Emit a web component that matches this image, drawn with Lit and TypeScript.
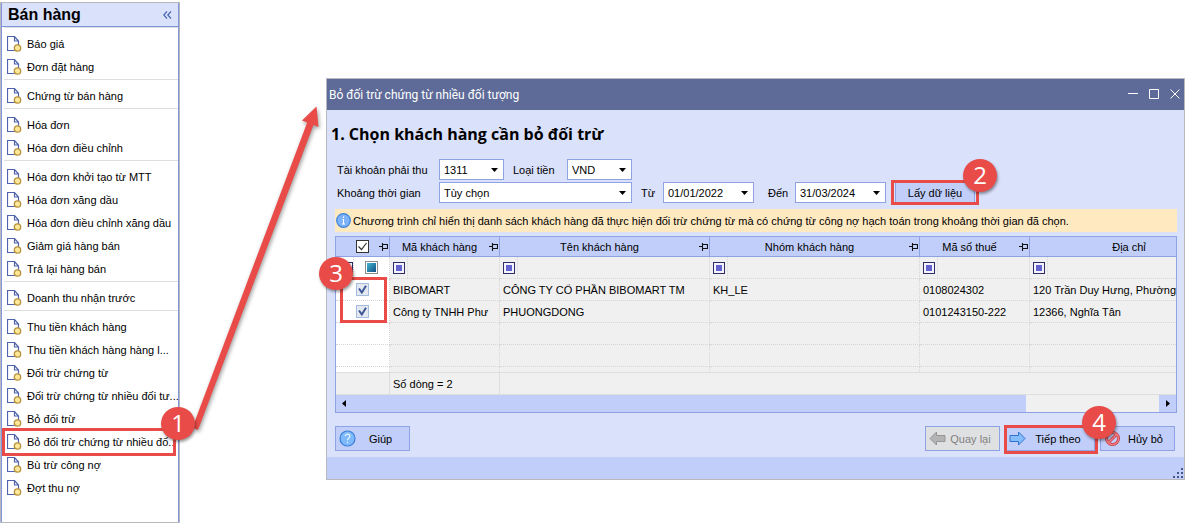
import { LitElement, html, css, svg, nothing } from "lit";
import { customElement } from "lit/decorators.js";

const MENU: string[][] = [
  ["Báo giá", "Đơn đặt hàng"],
  ["Chứng từ bán hàng"],
  ["Hóa đơn", "Hóa đơn điều chỉnh"],
  ["Hóa đơn khởi tạo từ MTT", "Hóa đơn xăng dầu", "Hóa đơn điều chỉnh xăng dầu", "Giảm giá hàng bán", "Trả lại hàng bán"],
  ["Doanh thu nhận trước"],
  [
    "Thu tiền khách hàng",
    "Thu tiền khách hàng hàng l...",
    "Đối trừ chứng từ",
    "Đối trừ chứng từ nhiều đối tư...",
    "Bỏ đối trừ",
    "Bỏ đối trừ chứng từ nhiều đố..",
    "Bù trừ công nợ",
    "Đợt thu nợ",
  ],
];
const ACTIVE = "Bỏ đối trừ chứng từ nhiều đố..";

const ROWS: string[][] = [
  ["BIBOMART", "CÔNG TY CỔ PHẦN BIBOMART TM", "KH_LE", "0108024302", "120 Trần Duy Hưng, Phường"],
  ["Công ty TNHH Phư", "PHUONGDONG", "", "0101243150-222", "12366, Nghĩa Tân"],
];
const COLUMNS = ["Mã khách hàng", "Tên khách hàng", "Nhóm khách hàng", "Mã số thuế", "Địa chỉ"];

const docIcon = html`<svg class="doc" width="15" height="16" viewBox="0 0 15 16" aria-hidden="true">
  <path d="M8 .5H.5v14h11V5L7.500 .5v4.500h4.500" fill="#fff" stroke="#4f62ad" stroke-width="1.200"/>
  <circle cx="10.500" cy="12" r="3.200" fill="#fde79a" stroke="#b8923a" stroke-width="1.300"/>
</svg>`;
const caret = html`<svg class="caret" width="7" height="4" viewBox="0 0 7 4" aria-hidden="true"><path d="M0 0h7L3.500 4z" fill="#000"/></svg>`;
const pin = html`<svg class="pin" width="9" height="8" viewBox="0 0 9 8" aria-hidden="true"><path d="M0 3.500h3M3.500 0v8M4 1.500h4.500v4H4M4 5.500h5" fill="none" stroke="#111" stroke-width="1.100"/></svg>`;
const filterMark = html`<span class="filter"><i class="mark"></i></span>`;

@customElement("app-root")
export class AppRoot extends LitElement {
  static styles = css`
    :host {
      display: flex;
      align-items: flex-start;
      position: relative;
      padding: 2px 4px 4px 0;
      background: #fff;
      color: #000;
      font: 11px/14px "Liberation Sans", Arial, sans-serif;
    }
    * { box-sizing: border-box; }
    svg { display: block; flex: none; }
    button, input, select { font: inherit; color: inherit; margin: 0; }

    .side {
      flex: none;
      width: 180px;
      padding-bottom: 22px;
      border: 1px solid #b9b9bd;
      box-shadow: inset 1px 0 #8095db, inset -1px 0 #8095db;
      margin-right: 146px;
    }
    .side-head {
      display: flex;
      align-items: center;
      justify-content: space-between;
      height: 24px;
      padding: 0 6px;
      margin: 0 1px;
      background: #dae1fb;
      border-bottom: 1px solid #8095db;
    }
    .side-head h2 { margin: 0; font-size: 16px; line-height: 22px; }
    .collapse { border: 0; padding: 0; background: none; }
    .group { margin: 0 1px 0 3px; padding: 5px 0 0; border-top: 1px solid #dedede; }
    .item { position: relative; }
    .link {
      display: flex;
      align-items: center;
      gap: 5px;
      height: 23px;
      padding: 0 0 1px 3px;
      color: #000;
      text-decoration: none;
      white-space: nowrap;
    }

    .frame { position: absolute; border: 3px solid #e84b48; pointer-events: none; }
    .badge {
      position: absolute;
      width: 34px;
      height: 33px;
      border-radius: 50%;
      background: #e84b48;
      box-shadow: 1px 2px 3px rgba(0, 0, 0, .4);
      color: #fff;
      font: 24px/32px "Open Sans", "Noto Sans", sans-serif;
      text-align: center;
      pointer-events: none;
      z-index: 2;
    }
    .frame-menu { inset: -3px 2px -2px -2px; }
    .badge-menu { right: -17px; top: -24px; }
    .frame-load { inset: -2px -4px -2px -4px; }
    .badge-load { right: -22px; top: -23px; }
    .frame-checks { left: 4px; top: 40px; width: 47px; height: 46px; }
    .badge-checks { left: -17px; top: 20px; }
    .frame-next { inset: -1px -3px -3px -1px; }
    .badge-next { right: -21px; top: -20px; }
    .arrow { position: absolute; left: 190px; top: 100px; }

    .window {
      flex: 1;
      min-width: 0;
      margin-top: 76px;
      border: 1px solid #b9b9bd;
      background: #dae1fb;
    }
    .titlebar {
      display: flex;
      align-items: center;
      height: 31px;
      padding: 0 3px 0 2px;
      background: #5e6b98;
      color: #fff;
      font: 12px/16px Roboto, "Noto Sans", sans-serif;
    }
    .titlebar h1 { flex: 1; margin: 0; font: inherit; }
    .wm { border: 0; padding: 0; margin-left: 10px; background: none; }
    .content { padding: 0 7px 6px 8px; }
    .content h2 {
      margin: 0 0 0 -4px;
      padding: 12px 0;
      font: bold 16px/25px "Open Sans", "Noto Sans", sans-serif;
    }
    .line { display: flex; align-items: center; height: 21px; padding-left: 2px; margin-bottom: 2px; }
    .l-main { width: 102px; }
    .l-cur { width: 63px; padding-left: 9px; }
    .l-from { width: 31px; padding-left: 9px; }
    .l-to { width: 41px; padding-left: 14px; }
    .combo { position: relative; height: 21px; }
    .w-s { width: 65px; }
    .w-m { width: 91px; }
    .w-l { width: 193px; }
    .combo select, .combo input {
      display: block;
      width: 100%;
      height: 21px;
      padding: 0 16px 0 4px;
      appearance: none;
      border: 1px solid #8ea2e4;
      border-radius: 0;
      background: #fff;
      line-height: 14px;
    }
    .caret { position: absolute; right: 6px; top: 9px; pointer-events: none; }
    .host { position: relative; }
    .line .host { margin-left: 9px; }
    .btn {
      display: flex;
      align-items: center;
      width: 75px;
      height: 25px;
      padding: 0 4px 0 3px;
      border: 1px solid #8ea2e4;
      background: #c1cef9;
      white-space: nowrap;
    }
    .btn span { flex: 1; text-align: center; }
    .btn.load { width: 80px; height: 21px; padding: 0; }
    .btn.next { width: 90px; }
    .btn:disabled { background: #dfe0e2; color: #808080; }
    .note {
      display: flex;
      align-items: center;
      gap: 2px;
      height: 23px;
      margin: 6px 0 4px;
      padding-left: 1px;
      background: #ffe9c0;
      white-space: nowrap;
    }

    .grid { position: relative; border: 1px solid #8ea2e4; }
    .clip { overflow: hidden; background: #f0f0f0; }
    table { table-layout: fixed; width: 894px; border-collapse: separate; border-spacing: 0; }
    .c0 { width: 54px; }
    .c-n { width: 110px; }
    .c-w { width: 210px; }
    .c-a { width: 200px; }
    th, td { padding: 0; overflow: hidden; white-space: nowrap; text-align: left; }
    th { height: 20px; border: solid #8ea2e4; border-width: 0 1px 1px 0; background: #c1cef9; font-weight: normal; }
    .th { display: flex; align-items: center; height: 19px; padding-right: 1px; }
    .th span { flex: 1; text-align: center; }
    .th .box { margin-left: 20px; margin-right: 10px; }
    tbody td { height: 22px; padding-left: 3px; border: dotted #d6d6d6; border-width: 0 1px 1px 0; }
    tbody .pick { background: #fff; padding-left: 20px; }
    tbody .filters td { padding-left: 0; }
    .filler td { height: 5px; border-bottom: 0; }
    tfoot td { height: 23px; padding-left: 3px; border: solid #dedede; border-width: 1px 1px 1px 0; }
    tfoot .plain { border-right: 0; }
    .filter { display: flex; align-items: center; width: 18px; height: 21px; padding-left: 3px; border-right: 1px dotted #d6d6d6; }
    .mark { width: 12px; height: 12px; border: 1px solid #302c68; background: #6463cf; box-shadow: inset 0 0 0 2px #f4f4ff; }
    .pair { display: flex; align-items: center; }
    .pair .filter { padding-left: 5px; }
    .box {
      display: block;
      appearance: none;
      flex: none;
      width: 13px;
      height: 13px;
      margin: 0;
      border: 1px solid #333;
      border-radius: 0;
      background: #fff url("data:image/svg+xml,%3Csvg xmlns='http://www.w3.org/2000/svg' viewBox='0 0 11 11'%3E%3Cpath d='M1.500 5.500l3 3 5-6.500' fill='none' stroke='%23333' stroke-width='1.200'/%3E%3C/svg%3E");
    }
    .box.row {
      border-color: #a3bcdf;
      background: #e4e8f0 url("data:image/svg+xml,%3Csvg xmlns='http://www.w3.org/2000/svg' viewBox='0 0 11 11'%3E%3Cpath d='M2 4.500l2.800 4L9 1.800' fill='none' stroke='%233d5796' stroke-width='2'/%3E%3C/svg%3E");
    }
    .box.mixed {
      margin-left: 11px;
      border-color: #8c8c8c;
      background: linear-gradient(135deg, #46b7cf, #0d4f86) content-box #fff;
      padding: 1px;
    }
    .scroll { display: flex; align-items: center; justify-content: space-between; height: 17px; padding: 0 6px; background: #c1cef9; }
    .track { flex: 1; display: flex; justify-content: flex-end; height: 17px; margin: 0 7px 0 0; }
    .free { width: 133px; background: #f0f0f0; }

    .actions { display: flex; gap: 5px; padding: 13px 2px 0 0; }
    .spring { flex: 1; }
    .status { display: flex; align-items: flex-end; justify-content: flex-end; height: 22px; background: #c1cef9; }
  `;

  private combo(id: string, value: string, size: string, date = false) {
    return html`<div class="combo ${size}">
      ${date
        ? html`<input id=${id} type="text" .value=${value}>`
        : html`<select id=${id}><option>${value}</option></select>`}
      ${caret}
    </div>`;
  }

  private sidebar() {
    return html`<nav class="side">
      <header class="side-head">
        <h2>Bán hàng</h2>
        <button class="collapse" aria-label="Thu gọn">
          <svg width="9" height="8" viewBox="0 0 9 8"><path d="M4 .5L.8 4 4 7.500M8 .5L4.800 4 8 7.500" fill="none" stroke="#4a69b5" stroke-width="1.200"/></svg>
        </button>
      </header>
      <div>
        ${MENU.map((g) => html`<div class="group" role="list">
          ${g.map((t) => html`<div class="item" role="listitem">
            <a class="link" href="#">${docIcon}${t}</a>
            ${t === ACTIVE ? html`<div class="frame frame-menu"></div><div class="badge badge-menu">1</div>` : nothing}
          </div>`)}
        </div>`)}
      </div>
    </nav>`;
  }

  private table() {
    return html`<div class="grid">
      <div class="clip">
        <table>
          <colgroup><col class="c0"><col class="c-n"><col class="c-w"><col class="c-w"><col class="c-n"><col class="c-a"></colgroup>
          <thead><tr>
            <th><div class="th"><input class="box" type="checkbox" checked aria-label="Chọn tất cả">${pin}</div></th>
            ${COLUMNS.map((c) => html`<th><div class="th"><span>${c}</span>${c === "Địa chỉ" ? nothing : pin}</div></th>`)}
          </tr></thead>
          <tbody>
            <tr class="filters">
              <td class="pick"><div class="pair">${filterMark}<input class="box mixed" type="checkbox" aria-label="Lọc"></div></td>
              ${COLUMNS.map(() => html`<td>${filterMark}</td>`)}
            </tr>
            ${ROWS.map((r) => html`<tr>
              <td class="pick"><input class="box row" type="checkbox" checked aria-label=${r[0]}></td>
              ${r.map((v) => html`<td>${v}</td>`)}
            </tr>`)}
            ${["", "", "filler"].map((k) => html`<tr class=${k}>
              <td class="pick"></td>${COLUMNS.map(() => html`<td></td>`)}
            </tr>`)}
          </tbody>
          <tfoot><tr><td></td><td>Số dòng = 2</td><td class="plain" colspan="4"></td></tr></tfoot>
        </table>
      </div>
      <div class="scroll">
        <svg width="4" height="7" viewBox="0 0 4 7"><path d="M4 0v7L0 3.500z"/></svg>
        <div class="track"><div class="free"></div></div>
        <svg width="4" height="7" viewBox="0 0 4 7"><path d="M0 0v7l4-3.500z"/></svg>
      </div>
      <div class="frame frame-checks"></div>
      <div class="badge badge-checks">3</div>
    </div>`;
  }

  render() {
    return html`
      ${this.sidebar()}
      <section class="window">
        <header class="titlebar">
          <h1>Bỏ đối trừ chứng từ nhiều đối tượng</h1>
          <button class="wm" aria-label="Thu nhỏ"><svg width="11" height="11" viewBox="0 0 11 11"><path d="M0 4.500h10" stroke="#fff"/></svg></button>
          <button class="wm" aria-label="Phóng to"><svg width="11" height="11" viewBox="0 0 11 11"><path d="M.5 .5h9v9h-9z" fill="none" stroke="#fff"/></svg></button>
          <button class="wm" aria-label="Đóng"><svg width="11" height="11" viewBox="0 0 11 11"><path d="M.5 .5l9 9M9.500 .5l-9 9" stroke="#fff"/></svg></button>
        </header>
        <div class="content">
          <h2>1. Chọn khách hàng cần bỏ đối trừ</h2>
          <div class="line">
            <label class="l-main" for="acc">Tài khoản phải thu</label>${this.combo("acc", "1311", "w-s")}
            <label class="l-cur" for="cur">Loại tiền</label>${this.combo("cur", "VND", "w-s")}
          </div>
          <div class="line">
            <label class="l-main" for="range">Khoảng thời gian</label>${this.combo("range", "Tùy chọn", "w-l")}
            <label class="l-from" for="from">Từ</label>${this.combo("from", "01/01/2022", "w-m", true)}
            <label class="l-to" for="to">Đến</label>${this.combo("to", "31/03/2024", "w-m", true)}
            <div class="host">
              <button class="btn load"><span>Lấy dữ liệu</span></button>
              <div class="frame frame-load"></div><div class="badge badge-load">2</div>
            </div>
          </div>
          <div class="note">
            <svg width="15" height="15" viewBox="0 0 15 15"><circle cx="7.500" cy="7.500" r="6.800" fill="#7db3fb" stroke="#3b82d8" stroke-width="1.200"/><path d="M7.500 3.500v1.500M6.500 6.500h1v4.500M6 11h3" fill="none" stroke="#fff" stroke-width="1.100"/></svg>
            <span>Chương trình chỉ hiển thị danh sách khách hàng đã thực hiện đối trừ chứng từ mà có chứng từ công nợ hạch toán trong khoảng thời gian đã chọn.</span>
          </div>
          ${this.table()}
          <div class="actions">
            <button class="btn">
              <svg width="17" height="17" viewBox="0 0 17 17"><circle cx="8.500" cy="8.500" r="7.500" fill="#7db9fb" stroke="#3b7fd6" stroke-width="1.200"/><path d="M6.200 6.300c0-3 4.800-3 4.800 0 0 1.700-2.400 1.900-2.400 4M8.600 11.800v1.400" fill="none" stroke="#e8f3ff" stroke-width="1.200"/></svg>
              <span>Giúp</span>
            </button>
            <div class="spring"></div>
            <button class="btn" disabled>
              <svg width="17" height="15" viewBox="0 0 17 15"><path d="M1 7.500L7.500 1v3.500H16v6H7.500V14z" fill="#b4b4b4" stroke="#969696"/></svg>
              <span>Quay lại</span>
            </button>
            <div class="host">
              <button class="btn next">
                <svg width="17" height="15" viewBox="0 0 17 15"><path d="M16 7.500L9.500 1v3.500H1v6h8.500V14z" fill="#85bdfc" stroke="#2f72cf"/></svg>
                <span>Tiếp theo</span>
              </button>
              <div class="frame frame-next"></div><div class="badge badge-next">4</div>
            </div>
            <button class="btn">
              <svg width="17" height="17" viewBox="0 0 17 17"><circle cx="8.500" cy="8.500" r="6" fill="none" stroke="#c93b42" stroke-width="3"/><path d="M4.500 12.500l8-8" stroke="#c93b42" stroke-width="3"/><circle cx="8.500" cy="8.500" r="6" fill="none" stroke="#f08085" stroke-width="1.400"/><path d="M4.500 12.500l8-8" stroke="#f08085" stroke-width="1.400"/></svg>
              <span>Hủy bỏ</span>
            </button>
          </div>
        </div>
        <footer class="status">
          <svg width="11" height="11" viewBox="0 0 11 11" fill="#46598f">
            ${[[8, 0], [8, 4], [4, 4], [8, 8], [4, 8], [0, 8]].map(([x, y]) => svg`<rect x=${x} y=${y} width="2" height="2"/>`)}
          </svg>
        </footer>
      </section>
      <svg class="arrow" width="134" height="336" viewBox="0 0 134 336" aria-hidden="true">
        <g fill="#e84b48" style="filter: drop-shadow(1px 2px 2px rgba(0,0,0,.4))">
          <path d="M126.500 6.500L112 20.600 117.200 22.500 2.500 327.500 8 330 123.500 25 128.500 27z"/>
        </g>
      </svg>
    `;
  }
}
